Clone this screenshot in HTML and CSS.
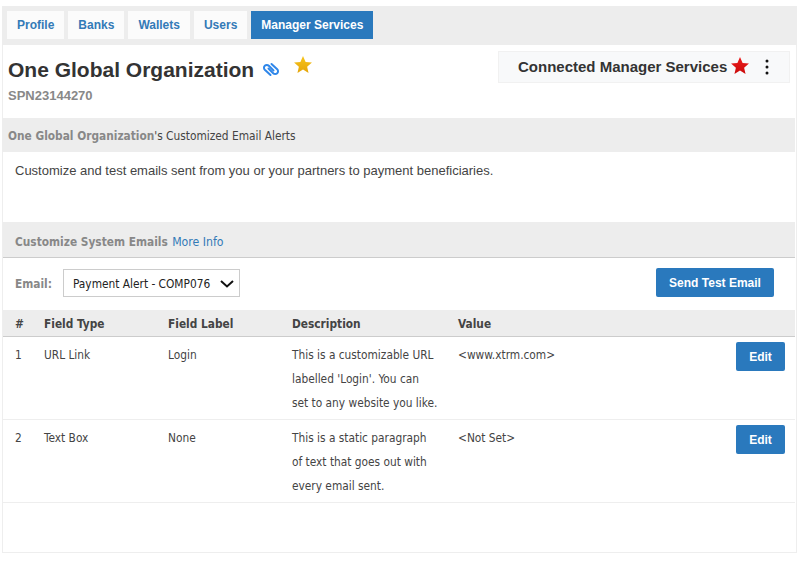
FILE: index.html
```html
<!DOCTYPE html>
<html lang="en">
<head>
<meta charset="utf-8">
<title>Manager Services</title>
<link rel="stylesheet" href="styles.css">
</head>
<body>
<div class="page">
  <nav class="tabs">
    <a class="tab">Profile</a>
    <a class="tab">Banks</a>
    <a class="tab">Wallets</a>
    <a class="tab">Users</a>
    <a class="tab active">Manager Services</a>
  </nav>
  <main class="panel">
    <header class="org">
      <div class="org-info">
        <div class="org-title">
          <h1>One Global Organization</h1>
          <svg class="link-icon" viewBox="0 0 18 15" width="18" height="15" fill="none" stroke="#2f87ea" stroke-width="2" stroke-linecap="round"><path d="M9.500 2l5.700 5.200a2.800 2.800 0 0 1 0 4 2.800 2.800 0 0 1-4 0L6.500 6.500"/><path d="M8.500 13L2.800 7.800a2.800 2.800 0 0 1 0-4 2.800 2.800 0 0 1 4 0L11.500 8.500"/></svg>
          <svg class="gold-star" viewBox="0 0 20 19" width="18" height="17"><defs><linearGradient id="gold" x1="0" y1="0" x2="0" y2="1"><stop offset="0" stop-color="#f7c51c"/><stop offset="1" stop-color="#e5a50a"/></linearGradient></defs><path fill="url(#gold)" d="M10 0l2.900 6.600 7.100.7-5.400 4.700 1.600 7L10 15l-6.200 4 1.600-7L0 7.300l7.100-.7z"/></svg>
        </div>
        <div class="org-id">SPN23144270</div>
      </div>
      <div class="connected">
        <span>Connected Manager Services</span>
        <svg class="red-star" viewBox="0 0 20 19" width="18" height="17"><defs><linearGradient id="red" x1="0" y1="0" x2="0" y2="1"><stop offset="0" stop-color="#ee1c1c"/><stop offset="1" stop-color="#c90b0b"/></linearGradient></defs><path fill="url(#red)" d="M10 0l2.900 6.600 7.100.7-5.400 4.700 1.600 7L10 15l-6.200 4 1.600-7L0 7.300l7.100-.7z"/></svg>
        <svg class="kebab" viewBox="0 0 4 16" width="4" height="16" fill="#111"><circle cx="2" cy="2" r="1.500"/><circle cx="2" cy="8" r="1.500"/><circle cx="2" cy="14" r="1.500"/></svg>
      </div>
    </header>

    <section class="band first"><strong>One Global Organization</strong>'s Customized Email Alerts</section>
    <p class="intro">Customize and test emails sent from you or your partners to payment beneficiaries.</p>

    <section class="band second"><strong>Customize System Emails</strong> <a class="more">More Info</a></section>
    <div class="controls">
      <label class="email-label">Email:</label>
      <div class="select">
        <span>Payment Alert - COMP076</span>
        <svg viewBox="0 0 14 8" width="14" height="8" fill="none" stroke="#111" stroke-width="2"><path d="M1 1l6 5.500L13 1"/></svg>
      </div>
      <button class="btn send">Send Test Email</button>
    </div>

    <table class="fields">
      <thead>
        <tr><th class="c-num">#</th><th class="c-type">Field Type</th><th class="c-label">Field Label</th><th class="c-desc">Description</th><th class="c-val">Value</th><th class="c-act"></th></tr>
      </thead>
      <tbody>
        <tr>
          <td>1</td><td>URL Link</td><td>Login</td>
          <td class="desc">This is a customizable URL labelled 'Login'. You can set to any website you like.</td>
          <td>&lt;www.xtrm.com&gt;</td>
          <td class="act"><button class="btn edit">Edit</button></td>
        </tr>
        <tr>
          <td>2</td><td>Text Box</td><td>None</td>
          <td class="desc">This is a static paragraph of text that goes out with every email sent.</td>
          <td>&lt;Not Set&gt;</td>
          <td class="act"><button class="btn edit">Edit</button></td>
        </tr>
      </tbody>
    </table>
  </main>
</div>
</body>
</html>
```
FILE: styles.css
```css
* { box-sizing: border-box; }
html, body { margin: 0; padding: 0; background: #fff; }
body { font-family: "DejaVu Sans", sans-serif; font-stretch: condensed; font-size: 11.800px; color: #444; }
.page { width: 795px; margin: 6px 0 0 2px; }
.tabs { display: flex; gap: 4px; height: 39px; padding: 5px 0 0 5px; background: #ededed; }
.tab { height: 28px; padding: 0 10px; background: #fbfbfb; color: #337ab7; font: bold 12px/28px "Liberation Sans", sans-serif; }
.tab.active { background: #2a79bd; color: #fff; }
.panel { height: 508px; border: 1px solid #eee; border-top: 0; }
.org { display: flex; justify-content: space-between; height: 73px; padding: 6px 6px 0 5px; }
.org-title { display: flex; align-items: flex-start; height: 36px; }
h1 { margin: 6px 0 0; font: bold 21px/26px "Liberation Sans", sans-serif; color: #333; }
.link-icon { margin: 11px 0 0 8px; }
.gold-star { margin: 5px 0 0 14px; }
.org-id { margin-top: 1px; font: bold 13px/15px "Liberation Sans", sans-serif; color: #888; }
.connected { display: flex; align-items: center; width: 292px; height: 32px; padding-left: 19px; background: #f8f9fa; border: 1px solid #f1f1f1; font: bold 15px/18px "Liberation Sans", sans-serif; color: #333; }
.red-star { margin: -3px 0 0 4px; }
.kebab { margin-left: 16px; }
.band { background: #ededed; margin-right: 1px; color: #444; }
.band.first { height: 34px; margin-left: -1px; padding-left: 6px; line-height: 37px; }
.band strong { color: #888; font-weight: bold; }
.band.second { height: 36px; padding-left: 12px; line-height: 40px; border-bottom: 1px solid #ccc; }
.more { margin-left: 1px; color: #337ab7; font-size: 12.200px; }
.intro { margin: 0; height: 70px; padding: 9px 0 0 12px; line-height: 19px; font-family: "Liberation Sans", sans-serif; font-size: 13px; }
.controls { display: flex; align-items: flex-start; height: 52px; padding: 10px 21px 0 12px; margin-right: 1px; }
.email-label { width: 48px; margin-top: 9px; font-weight: bold; color: #888; }
.select { display: flex; align-items: center; justify-content: space-between; width: 177px; height: 28px; margin-top: 1px; padding: 1px 5px 0 9px; border: 1px solid #ccc; background: #fff; color: #222; }
.btn { padding: 1px 0 0; border: 0; border-radius: 2px; background: #2a79bd; color: #fff; font: bold 12px "Liberation Sans", sans-serif; }
.send { width: 118px; height: 29px; margin-left: auto; }
.edit { width: 49px; height: 29px; }
.fields { width: 792px; border-collapse: separate; border-spacing: 0; table-layout: fixed; }
.fields th { height: 27px; padding: 2px 0 0 12px; text-align: left; background: #ededed; border-bottom: 1px solid #ccc; font-weight: bold; color: #444; }
.fields td { height: 83px; padding: 6px 20px 0 12px; vertical-align: top; line-height: 24px; border-bottom: 1px solid #eee; color: #444; }
.fields td.desc { padding-right: 8px; }
.c-num { width: 29px; }
.c-type { width: 124px; }
.c-label { width: 124px; }
.c-desc { width: 166px; }
.c-val { width: 200px; }
.fields td.act { padding: 5px 10px 0 0; text-align: right; }
```
